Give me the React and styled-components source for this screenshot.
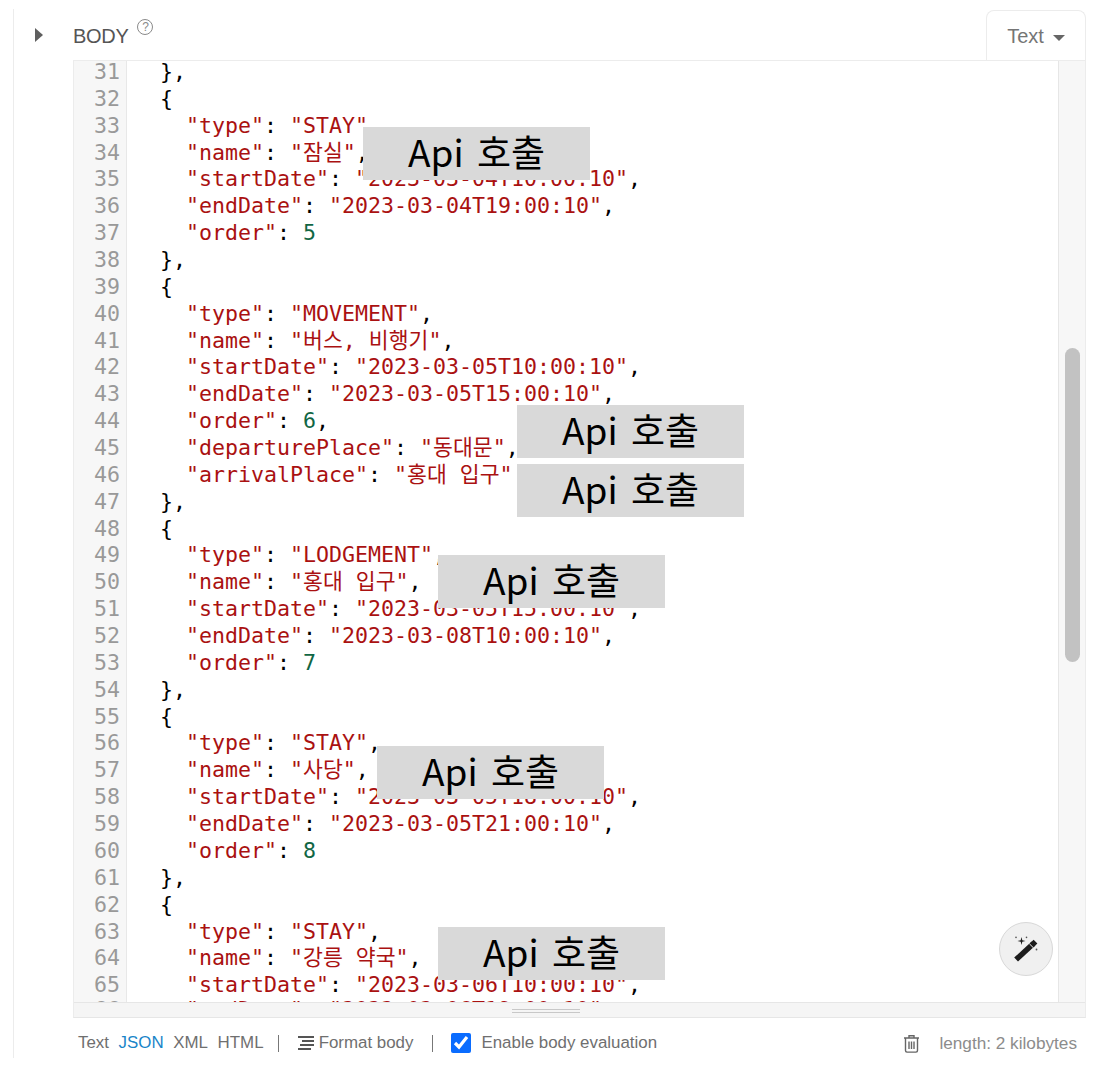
import styled, { createGlobalStyle } from "styled-components";

const GlobalStyle = createGlobalStyle`
  html, body {
    margin: 0;
    background: #fff;
    font-family: "Liberation Sans", Arial, sans-serif;
  }
`;

const CODE = `  },
  {
    "type": "STAY",
    "name": "잠실",
    "startDate": "2023-03-04T10:00:10",
    "endDate": "2023-03-04T19:00:10",
    "order": 5
  },
  {
    "type": "MOVEMENT",
    "name": "버스, 비행기",
    "startDate": "2023-03-05T10:00:10",
    "endDate": "2023-03-05T15:00:10",
    "order": 6,
    "departurePlace": "동대문",
    "arrivalPlace": "홍대 입구"
  },
  {
    "type": "LODGEMENT",
    "name": "홍대 입구",
    "startDate": "2023-03-05T15:00:10",
    "endDate": "2023-03-08T10:00:10",
    "order": 7
  },
  {
    "type": "STAY",
    "name": "사당",
    "startDate": "2023-03-05T18:00:10",
    "endDate": "2023-03-05T21:00:10",
    "order": 8
  },
  {
    "type": "STAY",
    "name": "강릉 약국",
    "startDate": "2023-03-06T10:00:10",
    "endDate": "2023-03-06T19:00:10",`.split("\n");

const FIRST_LINE = 31;

const MASKS = [
  { top: 66, left: 289 },
  { top: 344, left: 443 },
  { top: 403, left: 443 },
  { top: 494, left: 364 },
  { top: 685, left: 303 },
  { top: 866, left: 364 },
];

const Panel = styled.section`
  box-sizing: border-box;
  width: 1091px;
  height: 1049px;
  margin: 9px 0 0 13px;
  padding: 1px 18px 0 59px;
  border-left: 1px solid #ececec;
  display: flex;
  flex-direction: column;
`;

const Header = styled.header`
  height: 50px;
  display: flex;
  align-items: flex-start;
  position: relative;
`;

const Caret = styled.span`
  width: 0;
  height: 0;
  margin: 18px 0 0 -38px;
  border-left: 8px solid #5f5f5f;
  border-top: 7px solid transparent;
  border-bottom: 7px solid transparent;
`;

const Title = styled.h2`
  margin: 14px 0 0 30px;
  font-size: 20px;
  line-height: 24px;
  font-weight: 400;
  letter-spacing: -0.3px;
  color: #555;
`;

const Help = styled.span`
  box-sizing: border-box;
  width: 16px;
  height: 16px;
  margin: 9px 0 0 9px;
  border: 1px solid #8a8a8a;
  border-radius: 50%;
  font-size: 12px;
  line-height: 14px;
  text-align: center;
  color: #8a8a8a;
`;

const ModeButton = styled.div`
  box-sizing: border-box;
  margin-left: auto;
  width: 100px;
  height: 51px;
  border: 1px solid #ececec;
  border-bottom: 0;
  border-radius: 8px 8px 0 0;
  display: flex;
  align-items: center;
  justify-content: center;
  gap: 9px;
  font-size: 20px;
  color: #757575;
  background: #fff;
`;

const DownCaret = styled.span`
  width: 0;
  height: 0;
  margin-top: 3px;
  border-top: 6px solid #666;
  border-left: 6px solid transparent;
  border-right: 6px solid transparent;
`;

const Editor = styled.div`
  position: relative;
  box-sizing: border-box;
  height: 958px;
  border: 1px solid #ececec;
  border-bottom-color: #e6e6e6;
  display: grid;
  grid-template-columns: 1fr 26px;
  grid-template-rows: 1fr 15px;
  background: #fff;
  min-height: 0;
`;

const CodeArea = styled.div`
  overflow: hidden;
  position: relative;
  min-height: 0;
  border-right: 1px solid #e6e6e6;
`;

const Lines = styled.div`
  margin-top: -2px;
`;

// the last row is only just showing above the scrollbar
const Line = styled.div`
  display: flex;
  height: 26.86px;
  margin-top: ${(p) => (p.$peek ? "-2px" : "0")};
  font-family: "DejaVu Sans Mono", "Noto Sans CJK KR", monospace;
  font-size: 21.6px;
  line-height: 26.86px;
  white-space: pre;
  color: #000;
`;

const LineNumber = styled.span`
  box-sizing: border-box;
  flex: none;
  width: 53px;
  padding-right: 6px;
  text-align: right;
  color: #999;
  background: #f7f7f7;
  border-right: 1px solid #e8e8e8;
`;

const LineText = styled.span`
  padding-left: 7px;
`;

const Token = styled.span`
  color: ${(p) => (p.$kind === "number" ? "#116644" : "#aa1111")};
`;

const Mask = styled.div`
  position: absolute;
  top: ${(p) => p.$top}px;
  left: ${(p) => p.$left}px;
  box-sizing: border-box;
  width: 227px;
  height: 53px;
  padding-bottom: 6px;
  display: flex;
  align-items: center;
  justify-content: center;
  background: #d9d9d9;
  color: #000;
  font-family: "Noto Sans CJK KR", sans-serif;
  font-size: 37px;
  word-spacing: 5px;
`;

const MagicButton = styled.button`
  position: absolute;
  right: 32px;
  bottom: 41px;
  width: 54px;
  height: 54px;
  padding: 0;
  border: 1px solid #d8d8d8;
  border-radius: 50%;
  background: #f0f0f0;
  display: flex;
  align-items: center;
  justify-content: center;
`;

const VerticalTrack = styled.div`
  background: #f7f7f7;
  padding: 287px 5px 0 6px;
`;

const VerticalThumb = styled.div`
  width: 15px;
  height: 314px;
  border-radius: 8px;
  background: #c2c2c2;
`;

const HorizontalTrack = styled.div`
  grid-column: 1 / 3;
  background: #f5f5f5;
  border-top: 1px solid #e6e6e6;
  display: flex;
  justify-content: center;
  padding-top: 6px;
  padding-right: 68px;
`;

const Grip = styled.div`
  width: 68px;
  height: 2px;
  border-top: 1px solid #c8c8c8;
  border-bottom: 1px solid #c8c8c8;
`;

const Footer = styled.footer`
  box-sizing: border-box;
  display: flex;
  align-items: center;
  height: 40px;
  padding: 10px 9px 0 5px;
  font-size: 16.9px;
  color: #6f6f6f;
`;

const Format = styled.span`
  margin-right: 9.6px;
  color: ${(p) => (p.$active ? "#1a85c8" : "#6f6f6f")};
`;

const Divider = styled.span`
  width: 1px;
  height: 17px;
  margin: 0 18px 0 ${(p) => p.$left}px;
  background: #777;
`;

const FormatBody = styled.span`
  display: flex;
  align-items: center;
  gap: 4px;
`;

const CheckLabel = styled.label`
  display: flex;
  align-items: center;
  gap: 10px;
`;

const Check = styled.input`
  width: 20px;
  height: 20px;
  margin: 0;
  accent-color: #0a6cff;
`;

const Length = styled.span`
  margin-left: 19px;
  font-size: 17.2px;
  color: #8c8c8c;
`;

const Spacer = styled.span`
  flex: 1;
`;

// splits one json line into coloured pieces
function renderLine(text) {
  const parts = text.split(/("(?:[^"]*)"|\b\d+\b)/);
  return parts.map((part, i) => {
    if (part.startsWith('"')) return <Token key={i}>{part}</Token>;
    if (/^\d+$/.test(part)) return <Token key={i} $kind="number">{part}</Token>;
    return part;
  });
}

function FormatIcon() {
  return (
    <svg width="18" height="16" viewBox="0 0 18 16" fill="none" stroke="#555" strokeWidth="2">
      <path d="M1 2h16M5 6h12M3 10h14M1 14h13" />
    </svg>
  );
}

function TrashIcon() {
  return (
    <svg width="17" height="19" viewBox="0 0 17 19" fill="none" stroke="#666" strokeWidth="1.4">
      <path d="M1 4h15M6 4V1.7h5V4M2.5 4v12.6c0 .9.6 1.5 1.5 1.5h9c.9 0 1.5-.6 1.5-1.5V4M6 7.5v7.5M8.5 7.5v7.5M11 7.5v7.5" />
    </svg>
  );
}

function WandIcon() {
  return (
    <svg width="30" height="30" viewBox="0 0 30 30">
      <path d="M3.2 23.6 L20.6 7.6 L24.4 11.4 L7 27.4 Z" fill="#1c1c1c" />
      <path d="M19.2 8.9 L22.6 5.8 L26.4 9.6 L23 12.7 Z" fill="#1c1c1c" />
      <path d="M18.4 9.8 L22 13.4" stroke="#f0f0f0" strokeWidth="1" />
      <path
        d="M10.5 3 L11.3 6.2 L14.5 7 L11.3 7.8 L10.5 11 L9.7 7.8 L6.5 7 L9.7 6.2 Z"
        fill="#1c1c1c"
      />
      <circle cx="5" cy="3.4" r="0.8" fill="#555" />
      <circle cx="15.5" cy="3.4" r="0.8" fill="#555" />
      <circle cx="25.5" cy="15.5" r="0.9" fill="#555" />
    </svg>
  );
}

export default function App() {
  return (
    <Panel>
      <GlobalStyle />
      <Header>
        <Caret />
        <Title>BODY</Title>
        <Help>?</Help>
        <ModeButton>
          Text
          <DownCaret />
        </ModeButton>
      </Header>
      <Editor>
        <CodeArea>
          <Lines>
            {CODE.map((text, i) => (
              <Line key={i} $peek={i === CODE.length - 1}>
                <LineNumber>{FIRST_LINE + i}</LineNumber>
                <LineText>{renderLine(text)}</LineText>
              </Line>
            ))}
          </Lines>
        </CodeArea>
        <VerticalTrack>
          <VerticalThumb />
        </VerticalTrack>
        <HorizontalTrack>
          <Grip />
        </HorizontalTrack>
        {MASKS.map((m, i) => (
          <Mask key={i} $top={m.top} $left={m.left}>
            Api 호출
          </Mask>
        ))}
        <MagicButton>
          <WandIcon />
        </MagicButton>
      </Editor>
      <Footer>
        <Format>Text</Format>
        <Format $active>JSON</Format>
        <Format>XML</Format>
        <Format>HTML</Format>
        <Divider $left={4.5} />
        <FormatBody>
          <FormatIcon />
          Format body
        </FormatBody>
        <Divider $left={19} />
        <CheckLabel>
          <Check type="checkbox" defaultChecked readOnly />
          Enable body evaluation
        </CheckLabel>
        <Spacer />
        <TrashIcon />
        <Length>length: 2 kilobytes</Length>
      </Footer>
    </Panel>
  );
}
